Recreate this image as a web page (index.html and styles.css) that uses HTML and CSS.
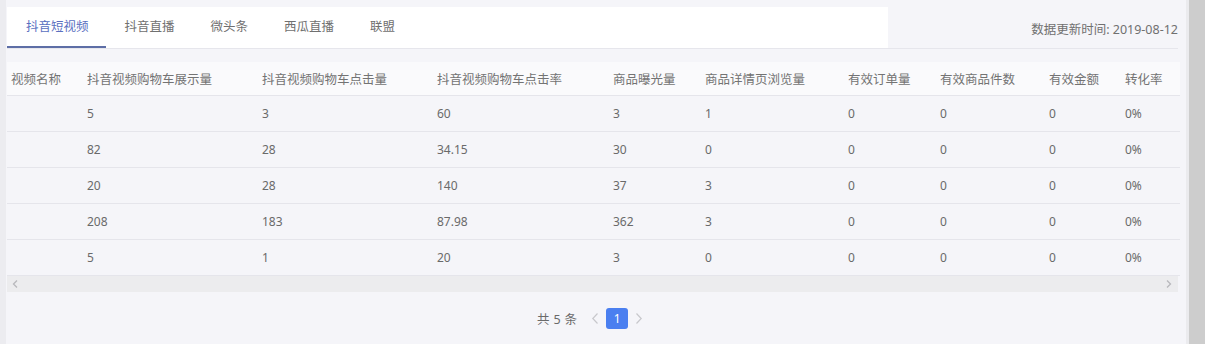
FILE: index.html
```html
<!DOCTYPE html>
<html lang="zh-CN">
<head>
    <meta charset="UTF-8">
    <title>数据统计</title>
    <link rel="stylesheet" href="styles.css">
</head>
<body>
    <div class="page">
        <div class="main">
            <div class="top-bar">
                <ul class="tabs">
                    <li class="tab active">抖音短视频</li>
                    <li class="tab">抖音直播</li>
                    <li class="tab">微头条</li>
                    <li class="tab">西瓜直播</li>
                    <li class="tab">联盟</li>
                </ul>
                <div class="update-time">数据更新时间: 2019-08-12</div>
            </div>

            <div class="table-wrap">
                <table class="data-table">
                    <colgroup>
                        <col style="width:76px"><col style="width:175px"><col style="width:175px">
                        <col style="width:176px"><col style="width:92px"><col style="width:143px">
                        <col style="width:92px"><col style="width:109px"><col style="width:76px">
                        <col style="width:59px">
                    </colgroup>
                    <thead>
                        <tr>
                            <th>视频名称</th>
                            <th>抖音视频购物车展示量</th>
                            <th>抖音视频购物车点击量</th>
                            <th>抖音视频购物车点击率</th>
                            <th>商品曝光量</th>
                            <th>商品详情页浏览量</th>
                            <th>有效订单量</th>
                            <th>有效商品件数</th>
                            <th>有效金额</th>
                            <th>转化率</th>
                        </tr>
                    </thead>
                    <tbody>
                        <tr><td></td><td>5</td><td>3</td><td>60</td><td>3</td><td>1</td><td>0</td><td>0</td><td>0</td><td>0%</td></tr>
                        <tr><td></td><td>82</td><td>28</td><td>34.15</td><td>30</td><td>0</td><td>0</td><td>0</td><td>0</td><td>0%</td></tr>
                        <tr><td></td><td>20</td><td>28</td><td>140</td><td>37</td><td>3</td><td>0</td><td>0</td><td>0</td><td>0%</td></tr>
                        <tr><td></td><td>208</td><td>183</td><td>87.98</td><td>362</td><td>3</td><td>0</td><td>0</td><td>0</td><td>0%</td></tr>
                        <tr><td></td><td>5</td><td>1</td><td>20</td><td>3</td><td>0</td><td>0</td><td>0</td><td>0</td><td>0%</td></tr>
                    </tbody>
                </table>
                <!-- 横向滚动条 -->
                <div class="h-scroll">
                    <svg class="arrow" width="6" height="8" viewBox="0 0 6 8"><path d="M5 0.5 L1.5 4 L5 7.5" fill="none" stroke="#b8b8bc" stroke-width="1.3"/></svg>
                    <svg class="arrow" width="6" height="8" viewBox="0 0 6 8"><path d="M1 0.5 L4.5 4 L1 7.5" fill="none" stroke="#b8b8bc" stroke-width="1.3"/></svg>
                </div>
            </div>

            <div class="pager">
                <span class="pager-total">共<b>5</b>条</span>
                <span class="pager-btn">
                    <svg width="8" height="11" viewBox="0 0 8 11"><path d="M6.5 0.5 L1.8 5.5 L6.5 10.5" fill="none" stroke="#c8c8cc" stroke-width="1.2"/></svg>
                </span>
                <span class="pager-num">1</span>
                <span class="pager-btn">
                    <svg width="8" height="11" viewBox="0 0 8 11"><path d="M1.5 0.5 L6.2 5.5 L1.5 10.5" fill="none" stroke="#c8c8cc" stroke-width="1.2"/></svg>
                </span>
            </div>
        </div>
        <div class="v-scroll"></div>
    </div>
</body>
</html>
```

FILE: styles.css
```css
/* 页面基础 */
html, body {
    margin: 0;
    height: 100%;
}
body {
    background-color: #ececf0;
    color: #666;
    font-family: "Noto Sans", "Noto Sans CJK SC", sans-serif;
    font-size: 12px;
}
.page {
    display: flex;
    height: 344px;
    margin-left: 6px;
    background-color: #f5f5f9;
}
.main {
    flex: 1;
    padding: 7px 8px 0 1px;
    min-width: 0;
}
.v-scroll {
    width: 16px;
    background-color: #cdcdcd;
    border-left: 3px solid #ebebee;
}

/* 顶部 tab */
.top-bar {
    display: flex;
    justify-content: space-between;
    align-items: center;
    border-bottom: 1px solid #e6e6ec;
}
.tabs {
    display: flex;
    list-style: none;
    margin: 0;
    padding: 0;
    width: 881px;
    height: 41px;
    background-color: #fff;
}
.tab {
    padding: 0 17px 0 19px;
    line-height: 40px;
    border-bottom: 2px solid transparent;
    color: #707070;
    font-size: 12.5px;
    cursor: pointer;
}
.tab.active {
    color: #5a6fbf;
    border-bottom-color: #5d6ea6;
}
.update-time {
    color: #707070;
    font-size: 12.5px;
    padding-top: 1px;
}

/* 表格 */
.table-wrap {
    margin-top: 13px;
}
.data-table {
    width: 1173px;
    table-layout: fixed;
    border-collapse: collapse;
}
.data-table th,
.data-table td {
    text-align: left;
    padding: 0 0 0 4px;
    white-space: nowrap;
    overflow: hidden;
    font-weight: normal;
    border-bottom: 1px solid #e5e5eb;
}
.data-table th {
    height: 33px;
    background-color: #fafafc;
    color: #737373;
    font-size: 12.5px;
}
.data-table td {
    height: 35px;
    color: #6a6a6a;
}
.h-scroll {
    display: flex;
    justify-content: space-between;
    align-items: center;
    height: 16px;
    padding: 0 6px 0 5px;
    background-color: #ececee;
}

/* 分页 */
.pager {
    display: flex;
    justify-content: center;
    align-items: center;
    margin-top: 16px;
    padding-right: 5px;
}
.pager-total {
    color: #6a6a6a;
    font-size: 12.5px;
    margin-right: 14px;
}
.pager-total b {
    font-weight: normal;
    margin: 0 4px;
}
.pager-btn {
    display: flex;
    align-items: center;
    justify-content: center;
    width: 8px;
}
.pager-num {
    width: 22px;
    height: 21px;
    line-height: 21px;
    border-radius: 3px;
    background-color: #4a7ff0;
    color: #fff;
    text-align: center;
    margin: 0 7px;
}
```
